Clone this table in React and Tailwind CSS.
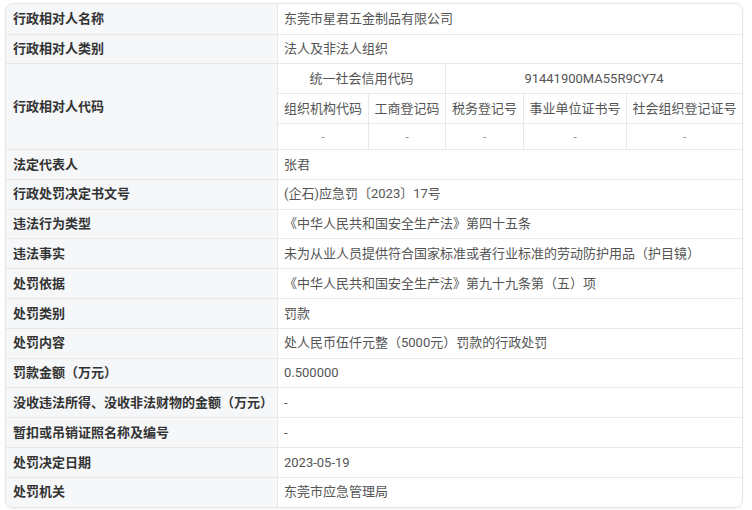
const rows = [
  { label: "法定代表人", value: "张君" },
  { label: "行政处罚决定书文号", value: "(企石)应急罚〔2023〕17号" },
  { label: "违法行为类型", value: "《中华人民共和国安全生产法》第四十五条" },
  {
    label: "违法事实",
    value: "未为从业人员提供符合国家标准或者行业标准的劳动防护用品（护目镜）",
  },
  { label: "处罚依据", value: "《中华人民共和国安全生产法》第九十九条第（五）项" },
  { label: "处罚类别", value: "罚款" },
  { label: "处罚内容", value: "处人民币伍仟元整（5000元）罚款的行政处罚" },
  { label: "罚款金额（万元）", value: "0.500000" },
  { label: "没收违法所得、没收非法财物的金额（万元）", value: "-" },
  { label: "暂扣或吊销证照名称及编号", value: "-" },
  { label: "处罚决定日期", value: "2023-05-19" },
  { label: "处罚机关", value: "东莞市应急管理局" },
];

const codeHeads = ["组织机构代码", "工商登记码", "税务登记号", "事业单位证书号", "社会组织登记证号"];

const labelClass =
  "w-[272px] shrink-0 bg-[#f6f7f9] border-r border-[#e8e8e8] px-[7px] flex items-center font-bold text-[#333]";

const Row = ({ label, value, h = "h-[29.8px]", first }) => (
  <div className={`flex ${h} ${first ? "" : "border-t border-[#e8e8e8]"}`}>
    <div className={labelClass}>{label}</div>
    <div className="flex-1 flex items-center px-[6px] text-[#555]">{value}</div>
  </div>
);

export default function App() {
  return (
    <div className="w-[752px] h-[510px] bg-white pt-[3px] pl-[5px] font-['Roboto','Noto_Sans_CJK_SC',sans-serif] text-[13px]">
      <div className="w-[738px] rounded-lg border border-[#e6e6e6] overflow-hidden shadow-[0_1px_3px_rgba(0,0,0,0.06)]">
        <Row first label="行政相对人名称" value="东莞市星君五金制品有限公司" h="h-[29.5px]" />
        <Row label="行政相对人类别" value="法人及非法人组织" h="h-[29.5px]" />
        <div className="flex h-[86px] border-t border-[#e8e8e8]">
          <div className={labelClass}>行政相对人代码</div>
          <div className="flex-1 grid grid-cols-[91px_77px_78px_103px_1fr] grid-rows-[30px_30px_1fr] text-[#555] text-center">
            <div className="col-span-2 flex items-center justify-center border-r border-b border-[#e8e8e8]">
              统一社会信用代码
            </div>
            <div className="col-span-3 flex items-center justify-center border-b border-[#e8e8e8]">
              91441900MA55R9CY74
            </div>
            {codeHeads.map((t, i) => (
              <div
                key={t}
                className={`flex items-center justify-center border-b border-[#e8e8e8] whitespace-nowrap ${i < 4 ? "border-r" : ""}`}
              >
                {t}
              </div>
            ))}
            {codeHeads.map((t, i) => (
              <div
                key={"d" + t}
                className={`flex items-center justify-center text-[#999] border-[#e8e8e8] ${i < 4 ? "border-r" : ""}`}
              >
                -
              </div>
            ))}
          </div>
        </div>
        {rows.map((r) => (
          <Row key={r.label} label={r.label} value={r.value} />
        ))}
      </div>
    </div>
  );
}
